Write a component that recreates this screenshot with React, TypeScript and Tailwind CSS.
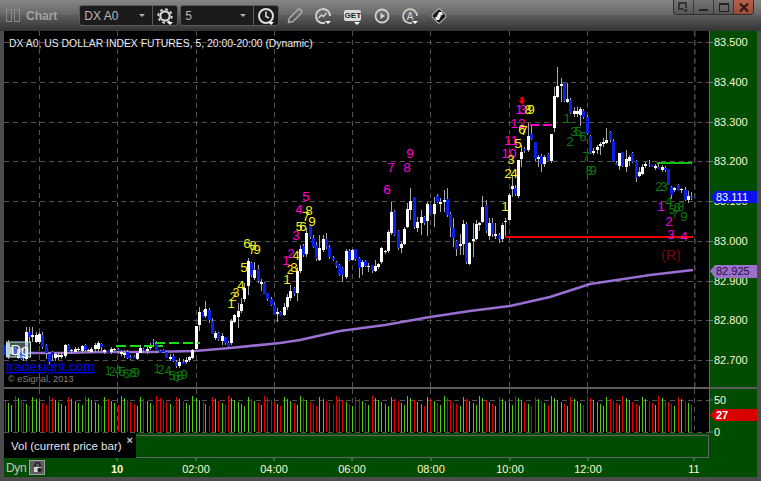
import React from "react";

type Row = number[];
type C = { x: number; t: number; b: number; c: number; hi: number; lo: number };

const segs: [number, number, Row[]][] = [
  [0, 322, [[14,70,100,1],[24,62,105,0],[34,75,95,0],[44,78,98,1],[54,80,108,0],[64,85,112,1],[70,88,110,1],[79,30,110,0,15,118],[88,30,45,1,15,60],[97,40,46,0,15,60],[108,38,58,0,30,62],[117,35,60,0,30,65],[127,38,75,1,30,80],[139,70,95,1,65,110],[148,95,118,1,90,130],[157,90,100,1,88,118],[166,95,108,0,90,118],[175,100,105,0,90,115],[184,100,105,0,90,112],[195,68,100,0,65,108],[205,68,90,1,66,92],[214,85,88,0,80,92],[225,80,88,0,75,92],[235,80,84,0,75,90],[245,72,87,0,68,92],[255,70,85,1,66,90],[265,85,88,0,80,92],[274,80,90,0,75,94],[284,68,80,0,62,90],[293,64,82,0,58,90],[302,65,75,1,62,88],[312,85,90,0,80,96]]],
  [105, 300, [[10,152,158,1],[19,148,158,0],[28,148,152,0],[38,148,155,1],[48,155,160,0,150,168],[58,160,165,0,150,175],[67,155,172,1],[76,170,177,1],[86,168,173,1],[96,158,175,0],[106,143,157,0],[115,148,152,1],[125,147,152,0,140,162],[136,135,145,0,130,150],[145,126,130,1],[154,130,155,1],[165,153,158,1],[175,150,155,1],[184,155,172,1],[195,170,175,0],[205,168,182,1],[213,185,197,1,180,205],[222,185,197,0,175,205],[233,185,190,1],[243,180,185,0,170,192],[253,172,180,0],[262,150,175,0]]],
  [190, 170, [[18,468,538,0],[28,425,465,0,410,482],[38,425,440,1],[46,418,438,0,393,445],[58,420,450,1,415,460],[67,452,490,1],[76,490,505,0],[85,490,510,1],[95,498,513,0,490,525],[105,501,519,1],[115,519,531,1],[124,453,519,0],[133,435,455,0],[145,423,440,0,400,475],[154,403,423,0,385,430],[163,355,388,0,340,395],[175,272,348,0,265,375],[184,280,315,1,275,320],[193,300,325,0,275,330],[205,297,332,1,285,340],[214,335,340,0,328,362],[223,338,372,1],[232,370,388,1],[244,388,405,1],[253,405,435,1],[262,425,430,0,415,455],[271,426,437,1],[283,410,435,0,400,438],[292,380,410,0,372,420],[301,363,383,0,345,392],[311,353,371,1],[322,303,370,0,290,392],[331,238,305,0,225,310],[340,228,255,1],[349,188,252,0,175,260],[361,167,200,1],[370,204,231,1,195,235],[379,226,268,1,215,272],[388,234,270,0,195,272],[400,207,240,0,195,245],[409,208,232,1,190,238],[418,232,263,1],[430,264,270,1],[439,276,288,1],[448,285,315,1],[457,295,317,1,290,335],[468,243,320,0],[478,243,270,1],[487,240,270,0],[496,237,268,1],[508,265,296,1,262,323],[517,276,291,0,270,315],[526,274,288,1],[535,288,292,0,280,305],[547,285,303,1],[556,288,303,0,270,305],[565,282,292,0,278,296],[574,235,278,0],[586,244,248,0,240,252],[595,186,243,0,180,248],[604,126,188,0,95,195],[613,124,195,1,120,198],[625,182,233,1],[634,222,233,0,215,248],[643,177,222,0,170,225],[652,117,170,0,100,175],[661,93,120,0,55,150],[673,81,170,1],[682,155,173,0,140,185],[694,141,158,0,120,195],[703,141,158,1],[712,102,153,0,95,198]]],
  [350, 140, [[240,195,222,1],[252,192,222,0,170,262],[262,168,187,1],[271,186,192,0,175,215],[281,180,186,0,150,215],[292,178,225,1,145,230],[301,222,262,1,215,290],[310,264,295,1,235,320],[319,304,328,1,300,348],[331,312,318,0,282,345],[340,253,312,0,240,345],[349,252,366,1],[358,308,372,0],[370,297,303,0,250,350],[379,252,297,0,240,300],[388,250,255,0,245,272],[397,200,246,0,168,250],[409,195,273,1,180,278],[418,250,288,0,235,300],[427,250,283,1,235,290],[436,282,288,0,250,296],[448,285,298,1,280,310],[457,255,298,0,250,305],[466,243,247,0,235,292],[478,165,240,0],[487,138,147,0,105,170],[496,143,162,1,135,168],[505,60,167,0]]],
  [480, 60, [[124,277,297,0,255,320],[133,268,275,1,260,280],[145,228,270,0,190,275],[154,222,237,1,195,240],[166,246,298,1],[175,291,297,0,285,320],[184,288,312,1,282,335],[193,290,310,0,285,320],[205,282,303,1],[214,222,303,0],[223,108,205,0,80,215],[232,78,112,0,20,115],[244,72,78,0,55,125],[253,70,125,1],[262,118,128,0,70,130],[271,120,160,1],[283,153,163,0,140,170],[292,153,163,0,142,170],[301,147,165,0,142,198],[310,153,171,1],[322,171,222,1],[331,228,280,1],[340,272,278,0,265,285],[352,262,272,0,255,282],[361,252,258,0,245,285],[370,245,252,0,235,262],[379,240,248,0,205,252],[391,216,240,1,212,245],[400,243,303,1],[409,308,315,1],[418,280,318,0,278,330],[427,276,318,1],[439,296,320,0,270,335],[448,292,305,0,285,318],[457,280,306,1],[469,303,353,1,300,365],[478,337,348,0,320,352],[487,320,340,0,312,345],[496,311,318,0,305,325],[508,313,316,1,300,320],[517,315,320,1],[526,318,324,0,312,330],[535,320,325,1,312,328],[547,320,328,0,315,335],[556,325,330,1,318,335],[565,328,375,1],[574,380,403,1,378,418],[583,385,392,0,380,396],[595,376,393,1],[604,388,392,0,384,400],[616,390,420,1],[625,408,420,0,392,428],[634,412,416,1,395,420]]],
];

const candles: C[] = segs.flatMap(([ox, oy, rows]) =>
  rows.map((r, i) => {
    const hi = r[4] ?? r[1] - ((i * 7) % 9);
    const lo = r[5] ?? r[2] + ((i * 5) % 8);
    return { x: ox + r[0] / 3, t: oy + r[1] / 3, b: oy + r[2] / 3, c: r[3], hi: oy + hi / 3, lo: oy + lo / 3 };
  })
);

const priceGrid = [42, 82, 122, 161, 201, 241, 281, 320, 360];
const priceLabels = ["83.500", "83.400", "83.300", "83.200", "83.100", "83.000", "82.900", "82.800", "82.700"];
const vGrid = [39, 117, 196, 274, 352, 430, 509, 587, 694];
const times: [number, string, boolean][] = [
  [117, "10", true], [196, "02:00", false], [274, "04:00", false], [352, "06:00", false],
  [431, "08:00", false], [510, "10:00", false], [588, "12:00", false], [694, "11", false],
];

const MAG = "#ff00d0", YEL = "#f4ee20", DG = "#0c7a0c";
const notes: [string, number, number, string, number?][] = [
  ["1", 231, 303, YEL, 11], ["2", 233, 296, YEL, 10], ["3", 236, 292, YEL, 10], ["4", 241, 285, YEL], ["5", 244, 267, YEL],
  ["6", 247, 243, YEL], ["7", 252, 249, YEL, 10], ["8", 253, 245, YEL, 11], ["9", 257, 249, YEL],
  ["1", 287, 279, YEL], ["2", 290, 269, YEL, 10], ["3", 294, 267, YEL], ["4", 296, 255, YEL], ["5", 299, 226, YEL, 10],
  ["6", 303, 226, YEL], ["7", 306, 216, YEL], ["8", 309, 210, YEL], ["9", 312, 221, YEL],
  ["1", 286, 260, MAG], ["2", 291, 253, MAG], ["3", 296, 235, MAG], ["4", 299, 209, MAG], ["5", 306, 196, MAG],
  ["6", 387, 189, MAG], ["7", 391, 167, MAG], ["8", 407, 167, MAG], ["9", 410, 153, MAG],
  ["1", 519, 109, MAG], ["3", 523, 109, MAG], ["12", 518, 123, MAG], ["11", 511, 140, MAG], ["10", 509, 153, MAG],
  ["8", 528, 109, YEL, 10], ["9", 531, 109, YEL], ["6", 522, 129, YEL], ["7", 524, 130, YEL], ["5", 518, 143, YEL],
  ["3", 511, 159, YEL], ["2", 508, 173, YEL], ["4", 514, 173, YEL], ["1", 505, 206, YEL],
  ["1", 567, 118, DG], ["3", 574, 131, DG], ["5", 578, 131, DG], ["2", 570, 141, DG], ["6", 583, 136, DG], ["7", 586, 156, DG],
  ["8", 589, 170, DG, 10], ["9", 593, 170, DG], ["2", 659, 186, DG], ["3", 664, 186, DG], ["4", 669, 201, DG],
  ["5", 672, 209, DG, 10], ["6", 677, 207, DG, 10], ["7", 675, 213, DG, 9], ["8", 681, 206, DG, 10], ["9", 684, 216, DG],
  ["1", 661, 206, MAG], ["2", 669, 221, MAG], ["3", 671, 234, MAG], ["4", 684, 236, MAG],
  ["1", 108, 370, DG, 10], ["2", 112, 371, DG, 10], ["4", 118, 370, DG, 10], ["5", 122, 371, DG, 10], ["6", 126, 373, DG, 10], ["7", 130, 373, DG, 9], ["8", 133, 372, DG, 10], ["9", 136, 372, DG],
  ["1", 157, 368, DG, 10], ["2", 161, 369, DG, 10], ["4", 168, 370, DG, 10], ["5", 172, 375, DG, 10], ["6", 176, 376, DG, 10], ["7", 178, 378, DG, 9], ["8", 180, 375, DG, 10], ["9", 184, 374, DG],
];

function Grid({ ys, top, bottom }: { ys: number[]; top: number; bottom: number }) {
  return (
    <g stroke="#525252" strokeWidth={1} strokeDasharray="5 4" shapeRendering="crispEdges">
      {ys.map((y) => <line key={y} x1={4} x2={709} y1={y} y2={y} />)}
      {vGrid.map((x) => <line key={x} x1={x} x2={x} y1={top} y2={bottom} />)}
    </g>
  );
}

function PriceChart() {
  return (
    <svg width={705} height={356} viewBox="4 31 705 356" className="block bg-black shrink-0">
      <Grid ys={priceGrid} top={31} bottom={387} />
      <line x1={695} x2={695} y1={31} y2={387} stroke="#4a4a4a" strokeDasharray="6 3" />
      <polyline fill="none" stroke="#9a6fd2" strokeWidth={2.6} points="4,353 60,353 100,352 150,352 195,351 230,348 280,343 300,340 340,331 385,325 430,317 470,311 510,306 550,297 590,284 617,280 650,275 693,270" />
      <g shapeRendering="crispEdges">
        {candles.map((k, i) => (
          <g key={i}>
            <line x1={Math.round(k.x) + 0.5} x2={Math.round(k.x) + 0.5} y1={k.hi} y2={k.lo} stroke="#a8a8a8" />
            <rect x={Math.round(k.x) - 1} y={Math.round(k.t)} width={3} height={Math.max(1, Math.round(k.b - k.t))} fill={k.c ? "#0a20e6" : "#ffffff"} />
          </g>
        ))}
        <line x1={116} x2={163} y1={345.5} y2={345.5} stroke="#16e016" strokeWidth={2} strokeDasharray="10 4" />
        <line x1={155} x2={200} y1={343} y2={343} stroke="#16e016" strokeWidth={2} strokeDasharray="10 4" />
        <line x1={657} x2={692} y1={162.5} y2={162.5} stroke="#12c412" strokeWidth={2} />
        <line x1={505} x2={693} y1={237} y2={237} stroke="#f00000" strokeWidth={2} />
        <line x1={530} x2={554} y1={125} y2={125} stroke="#ff00cc" strokeWidth={2} strokeDasharray="9 4" />
      </g>
      <path d="M520.500 97h3v3.500h2l-3.500 4-3.500-4h2z" fill="#f00000" />
      {notes.map(([s, x, y, f, z], i) => (
        <text key={i} x={x} y={y + 5} textAnchor="middle" fontSize={z ? z + 2 : 13.5} fill={f}>{s}</text>
      ))}
      <text x={671} y={260} textAnchor="middle" fontSize={14} fill="#7a0a0a">(R)</text>
      <text x={9} y={47} fontSize={10.4} fill="#e8ecf4">DX A0, US DOLLAR INDEX FUTURES, 5, 20:00-20:00 (Dynamic)</text>
      <rect x={6.5} y={342} width={24} height={15} fill="#7fa5a5" fillOpacity={0.5} stroke="#c4e6e6" />
      <text x={11} y={355} fontSize={14} fill="#f0f6f6">Dg</text>
      <text x={6} y={371} fontSize={13.5} fill="#0000f0" textDecoration="underline">tradesight.com</text>
      <text x={8} y={382} fontSize={9.2} fill="#808080">© eSignal, 2013</text>
    </svg>
  );
}

function PriceAxis() {
  return (
    <svg width={48} height={356} viewBox="709 31 48 356" className="block shrink-0 bg-[#004c00]">
      <line x1={709.5} x2={709.5} y1={31} y2={387} stroke="#666" />
      {priceGrid.map((y, i) => (
        <g key={y}>
          <line x1={709} x2={713} y1={y} y2={y} stroke="#777" shapeRendering="crispEdges" />
          <text x={714} y={y + 4} fontSize={11} fill="#fdf8d6">{priceLabels[i]}</text>
        </g>
      ))}
      <path d="M711 197l4-6h42v12h-42z" fill="#0a10f0" />
      <text x={716} y={201} fontSize={11} fill="#ffffff">83.111</text>
      <path d="M710 271l5-6h42v13h-42z" fill="#9a70c8" />
      <text x={716} y={275} fontSize={11} fill="#241050">82.925</text>
    </svg>
  );
}

function VolChart() {
  return (
    <svg width={705} height={44} viewBox="4 389 705 44" className="block bg-black shrink-0">
      <Grid ys={[400, 432]} top={389} bottom={433} />
      <g shapeRendering="crispEdges">
        {candles.map((k, i) => {
          const top = 396 + ((i * 13 + 5) % 11);
          return <rect key={i} x={Math.round(k.x)} y={top} width={1} height={432 - top} fill={k.c ? "#e00000" : "#52cc10"} />;
        })}
        <rect x={691} y={415} width={1} height={17} fill="#e00000" />
      </g>
    </svg>
  );
}

function VolAxis() {
  return (
    <svg width={48} height={44} viewBox="709 389 48 44" className="relative z-10 block shrink-0 overflow-visible bg-[#004c00]">
      <line x1={709.5} x2={709.5} y1={389} y2={433} stroke="#666" />
      <line x1={709} x2={713} y1={400} y2={400} stroke="#777" />
      <line x1={709} x2={713} y1={432} y2={432} stroke="#777" />
      <text x={714} y={404} fontSize={11} fill="#fdf8d6">50</text>
      <text x={714} y={436} fontSize={11} fill="#fdf8d6">0</text>
      <path d="M710 415l5-6h42v12h-42z" fill="#d80000" />
      <text x={716} y={419} fontSize={11} fontWeight={700} fill="#ffffff">27</text>
    </svg>
  );
}

const Tri = ({ x, y }: { x: number; y: number }) => <path d={`M${x} ${y}h6l-3 3z`} fill="#fff" />;

function Combo({ label, children }: { label: string; children: React.ReactNode }) {
  return (
    <div className="flex h-[21px] w-[99px] items-stretch rounded-[3px] border border-[#5a5a5a] bg-[#1b1b1b]">
      <div className="flex flex-1 items-center justify-between pl-[4px] pr-[7px] text-[12px] text-[#b8b8b8]">
        <span>{label}</span>
        <svg width={6} height={3} viewBox="0 0 6 3"><path d="M0 0h6l-3 3z" fill="#b0b0b0" /></svg>
      </div>
      <div className="flex w-[25px] items-center justify-center border-l border-[#5a5a5a]">{children}</div>
    </div>
  );
}

const Gear = () => (
  <svg width={20} height={20} viewBox="0 0 20 20" fill="none">
    <circle cx={10} cy={10} r={4.700} stroke="#d8d8d8" strokeWidth={2.200} />
    <circle cx={10} cy={10} r={6.800} stroke="#d8d8d8" strokeWidth={1.800} strokeDasharray="2.700 2.640" />
    <Tri x={12} y={16} />
  </svg>
);
const ClockI = () => (
  <svg width={20} height={20} viewBox="0 0 20 20" fill="none">
    <circle cx={10} cy={10} r={7} stroke="#dcdcdc" strokeWidth={2} />
    <path d="M10 5.500V10.500L13 12" stroke="#dcdcdc" strokeWidth={1.600} />
    <Tri x={12} y={16} />
  </svg>
);
const Pencil = () => (
  <svg width={18} height={18} viewBox="0 0 18 18" fill="none">
    <path d="M2.500 15.500l1-4.500 8-8a2 2 0 0 1 3.500 3.500l-8 8z" stroke="#a8a8a8" strokeWidth={1.700} strokeLinejoin="round" />
  </svg>
);
const GaugeI = () => (
  <svg width={20} height={20} viewBox="0 0 20 20" fill="none">
    <path d="M12 16.800A7 7 0 1 1 17 10" stroke="#cfcfcf" strokeWidth={2} />
    <path d="M5.500 12l3-3 2 1.500 3-3.500" stroke="#cfcfcf" strokeWidth={1.600} />
    <Tri x={12} y={15} />
  </svg>
);
const Play = () => (
  <svg width={18} height={18} viewBox="0 0 18 18" fill="none">
    <circle cx={9} cy={9} r={6.500} stroke="#d2d2d2" strokeWidth={1.800} />
    <path d="M7.500 5.800v6.400L12 9z" fill="#d2d2d2" />
  </svg>
);
const AIcon = () => (
  <svg width={20} height={20} viewBox="0 0 20 20" fill="none">
    <path d="M12 16.800A7 7 0 1 1 17 10" stroke="#cfcfcf" strokeWidth={1.800} />
    <text x={10} y={13.500} textAnchor="middle" fontSize={10} fill="#d6d6d6">A</text>
    <Tri x={12} y={15} />
  </svg>
);
const Diamond = () => (
  <svg width={18} height={18} viewBox="0 0 18 18">
    <rect x={3.500} y={3.500} width={11} height={11} rx={2} transform="rotate(45 9 9)" fill="#151515" stroke="#c0c0c0" strokeWidth={1} />
    <path d="M9 5l3 0 1 3-2 .2L8.500 10.500 7 9z" fill="#eee" />
    <path d="M9 13l-3 0-1-3 2-.2 2.500-2L11 9z" fill="#eee" />
  </svg>
);

function WindowButtons() {
  return (
    <div className="mr-[7px] flex h-[15px] self-start overflow-hidden rounded-b-[4px] border border-t-0 border-[#2e2e2e] bg-[linear-gradient(#767676,#565656)]">
      <div className="flex w-[20px] items-center justify-center border-r border-[#3a3a3a]">
        <svg width={11} height={11} viewBox="0 0 11 11" fill="none"><path d="M8 6V1H1v6h4" stroke="#222" strokeWidth={1.400} /><path d="M5 7.500h5l-2.500 2.500z" fill="#222" /></svg>
      </div>
      <div className="flex w-[20px] items-end justify-center border-r border-[#3a3a3a] pb-[3px]">
        <div className="h-[2px] w-[9px] bg-[#222]" />
      </div>
      <div className="flex w-[20px] items-center justify-center border-r border-[#3a3a3a]">
        <div className="h-[9px] w-[10px] border border-t-2 border-[#222]" />
      </div>
      <div className="flex w-[19px] items-center justify-center bg-[linear-gradient(#b4604a,#9a4a38)]">
        <svg width={10} height={9} viewBox="0 0 10 9"><path d="M1 .5l8 8M9 .5l-8 8" stroke="#2a1512" strokeWidth={2} /></svg>
      </div>
    </div>
  );
}

function TitleBar() {
  return (
    <div className="flex h-[31px] shrink-0 items-center bg-[linear-gradient(#868686_0,#686868_14px,#5e5e5e_15px,#333333_31px)]">
      <div className="ml-[6px] flex gap-[2px]">
        <div className="h-[13px] w-[6px] border border-[#8c8c8c]" />
        <div className="h-[13px] w-[6px] border border-[#8c8c8c]" />
      </div>
      <span className="ml-[6px] text-[12px] font-bold text-[#a2a2a2]">Chart</span>
      <div className="ml-[22px] flex gap-[2px]">
        <Combo label="DX A0"><Gear /></Combo>
        <Combo label="5"><ClockI /></Combo>
      </div>
      <div className="ml-[7px] flex items-center">
        <Pencil />
        <div className="ml-[9px]"><GaugeI /></div>
        <div className="relative ml-[11px] flex h-[11px] w-[17px] items-center justify-center rounded-[2px] bg-[#dcdcdc] text-[8px] font-bold leading-none text-[#222]">
          GET
          <svg width={6} height={3} viewBox="0 0 6 3" className="absolute -bottom-[4px] right-[1px]"><path d="M0 0h6l-3 3z" fill="#fff" /></svg>
        </div>
        <div className="ml-[12px]"><Play /></div>
        <div className="ml-[9px]"><AIcon /></div>
        <div className="ml-[10px]"><Diamond /></div>
      </div>
      <div className="flex-1" />
      <WindowButtons />
    </div>
  );
}

function TimeAxis() {
  return (
    <div className="flex h-[19px] shrink-0 items-center bg-[#004c00]">
      <span className="ml-[2px] w-[23px] text-[12px] tracking-[-0.3px] text-[#c4c8b4]">Dyn</span>
      <div className="flex h-[15px] w-[16px] items-center justify-center border border-[#a0a0a0] bg-[#5c5c5c]">
        <svg width={11} height={11} viewBox="0 0 11 11" fill="none">
          <path d="M3 5V3a2.500 2.500 0 0 1 5 0v2" stroke="#222" strokeWidth={1.400} />
          <rect x={2} y={5} width={7} height={5} fill="#d8d8d8" />
          <circle cx={7.500} cy={8} r={2.200} fill="#222" />
        </svg>
      </div>
      <svg width={664} height={19} viewBox="45 458 664 19" className="block">
        {times.map(([x, s, b]) => (
          <g key={s}>
            <line x1={x} x2={x} y1={458} y2={461} stroke="#888" />
            <text x={x} y={473} textAnchor="middle" fontSize={11} fontWeight={b ? 700 : 400} fill="#fdf8d6">{s}</text>
          </g>
        ))}
      </svg>
    </div>
  );
}

export default function App() {
  return (
    <div className="flex h-[481px] w-[761px] flex-col overflow-hidden bg-[#4c4c4c] font-['Liberation_Sans',sans-serif]">
      <TitleBar />
      <div className="flex flex-col px-[4px]">
        <div className="flex">
          <PriceChart />
          <PriceAxis />
        </div>
        <div className="h-[2px] bg-[#5c5c5c]" />
        <div className="flex">
          <VolChart />
          <VolAxis />
        </div>
        <div className="flex h-[25px] bg-[#004c00]">
          <div className="flex w-[132px] items-start justify-between bg-black pl-[7px] pr-[3px] pt-[6px] text-[11.5px] leading-[14px] text-[#e2e6f0]">
            <span>Vol (current price bar)</span>
            <span className="-mt-[5px] text-[11px] font-bold leading-[12px] text-[#c8c8c8]">×</span>
          </div>
          <div className="mt-[2px] w-[573px] border-r border-t border-b border-[#666] bg-[#004c00]" />
        </div>
        <TimeAxis />
      </div>
    </div>
  );
}
